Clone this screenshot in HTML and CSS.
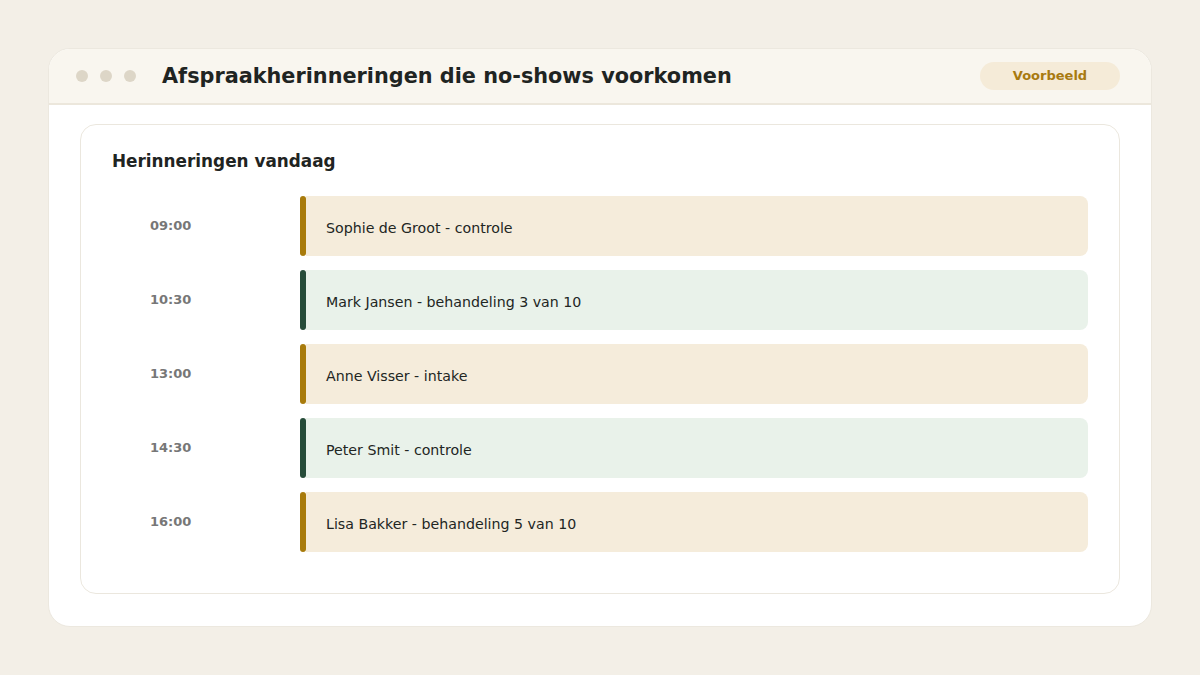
FILE: index.html
```html
<!DOCTYPE html>
<html lang="nl">

<head>
    <meta charset="UTF-8">
    <title>Afspraakherinneringen</title>
    <link rel="stylesheet" href="styles.css">
</head>

<body>
    <div class="venster">
        <header class="balk">
            <div class="stippen">
                <span></span>
                <span></span>
                <span></span>
            </div>
            <h1>Afspraakherinneringen die no-shows voorkomen</h1>
            <span class="label">Voorbeeld</span>
        </header>

        <main class="inhoud">
            <section class="kaart">
                <h2>Herinneringen vandaag</h2>

                <ul class="lijst">
                    <li class="rij goud">
                        <span class="tijd">09:00</span>
                        <span class="streep"></span>
                        <div class="afspraak">Sophie de Groot - controle</div>
                    </li>
                    <li class="rij groen">
                        <span class="tijd">10:30</span>
                        <span class="streep"></span>
                        <div class="afspraak">Mark Jansen - behandeling 3 van 10</div>
                    </li>
                    <li class="rij goud">
                        <span class="tijd">13:00</span>
                        <span class="streep"></span>
                        <div class="afspraak">Anne Visser - intake</div>
                    </li>
                    <li class="rij groen">
                        <span class="tijd">14:30</span>
                        <span class="streep"></span>
                        <div class="afspraak">Peter Smit - controle</div>
                    </li>
                    <li class="rij goud">
                        <span class="tijd">16:00</span>
                        <span class="streep"></span>
                        <div class="afspraak">Lisa Bakker - behandeling 5 van 10</div>
                    </li>
                </ul>
            </section>
        </main>
    </div>
</body>

</html>
```

FILE: styles.css
```css
body {
    margin: 0;
    background-color: #f3efe7;
    font-family: "DejaVu Sans", sans-serif;
    color: #222623;
}

.venster {
    margin: 48px;
    height: 579px;
    box-sizing: border-box;
    background-color: #fff;
    border: 1px solid #ece8df;
    border-radius: 22px;
    overflow: hidden;
    display: flex;
    flex-direction: column;
}

/* titelbalk */
.balk {
    height: 56px;
    box-sizing: border-box;
    background-color: #f9f6ef;
    border-bottom: 2px solid #ece7dc;
    display: flex;
    align-items: center;
    padding: 0 31px 0 27px;
}

.stippen {
    display: flex;
    gap: 12px;
    margin-right: 26px;
}

.stippen span {
    width: 12px;
    height: 12px;
    border-radius: 50%;
    background-color: #ddd6c7;
}

.balk h1 {
    font-size: 20.8px;
    font-weight: bold;
    margin: 0;
    flex: 1;
    color: #1f2422;
}

.label {
    width: 140px;
    height: 28px;
    line-height: 28px;
    text-align: center;
    border-radius: 14px;
    background-color: #f5ebd8;
    color: #a87a10;
    font-size: 13px;
    font-weight: bold;
}

/* inhoud */
.inhoud {
    padding: 19px 31px 32px 31px;
    flex: 1;
    display: flex;
}

.kaart {
    flex: 1;
    border: 1px solid #ebe7de;
    border-radius: 16px;
    padding: 24px 31px 0 31px;
}

.kaart h2 {
    font-size: 16.85px;
    font-weight: bold;
    margin: 0 0 23px 0;
    line-height: 24px;
    color: #1f2422;
}

.lijst {
    list-style: none;
    margin: 0;
    padding: 0;
    display: flex;
    flex-direction: column;
    gap: 14px;
}

.rij {
    display: flex;
    align-items: center;
}

.tijd {
    width: 188px;
    padding-left: 38px;
    box-sizing: border-box;
    font-size: 13px;
    font-weight: bold;
    color: #777;
    margin-top: -2px;
}

.streep {
    width: 6px;
    height: 60px;
    border-radius: 3px;
}

.afspraak {
    flex: 1;
    height: 60px;
    box-sizing: border-box;
    display: flex;
    align-items: center;
    padding: 4px 0 0 20px;
    font-size: 14.2px;
    border-radius: 0 8px 8px 0;
}

.goud .streep {
    background-color: #a87b0c;
}

.goud .afspraak {
    background-color: #f5ecdb;
}

.groen .streep {
    background-color: #264c39;
}

.groen .afspraak {
    background-color: #e9f2ea;
}
```
